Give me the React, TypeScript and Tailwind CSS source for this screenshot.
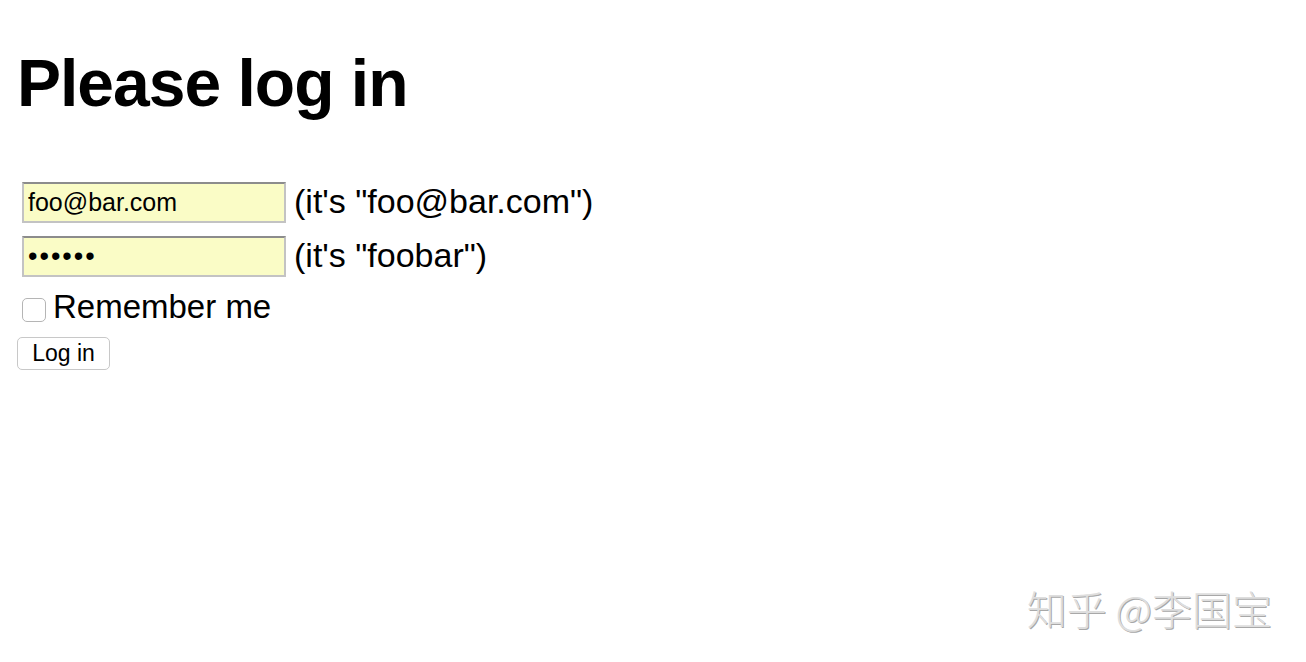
import React from "react";

const App = () => {
  return (
    <div className="relative h-[662px] w-[1306px] overflow-hidden bg-white pl-[17px] pt-[43px] font-['Liberation_Sans',Arial,sans-serif] text-black">
      {/* Title */}
      <h1 className="text-[66px] font-bold leading-[80px] tracking-[-1px]">Please log in</h1>

      {/* Form */}
      <form className="mt-[59px] flex flex-col" onSubmit={(e) => e.preventDefault()}>
        <div className="flex h-[54px] items-start gap-[8px] pl-[5px]">
          <input
            type="text"
            defaultValue="foo@bar.com"
            className="h-[41px] w-[264px] border-2 border-[#c3c3c3] border-t-[#8c8c8c] bg-[#fafcc6] px-[4px] text-[25px] outline-none"
          />
          <span className="text-[34px] leading-[38px]">(it's "foo@bar.com")</span>
        </div>
        <div className="flex h-[54px] items-start gap-[8px] pl-[5px]">
          <input
            type="password"
            defaultValue="foobar"
            className="h-[41px] w-[264px] border-2 border-[#c3c3c3] border-t-[#8c8c8c] bg-[#fafcc6] px-[4px] text-[27px] tracking-[2px] outline-none"
          />
          <span className="text-[34px] leading-[38px]">(it's "foobar")</span>
        </div>
        <label className="flex h-[39px] items-start gap-[7px] pl-[5px]">
          <input
            type="checkbox"
            className="mt-[8px] h-[24px] w-[24px] appearance-none rounded-[5px] border border-[#b5b5b5] bg-white"
          />
          <span className="text-[33px] leading-[34px]">Remember me</span>
        </label>
        <div className="mt-[8px]">
          <button
            type="submit"
            className="h-[33px] w-[93px] rounded-[5px] border border-[#c8c8c8] bg-white text-[23px] leading-none"
          >
            Log in
          </button>
        </div>
      </form>

      {/* Watermark */}
      <div className="absolute bottom-[34px] right-[34px] font-['Noto_Sans_CJK_SC',sans-serif] text-[40px] font-light leading-none text-[#dedede] [text-shadow:1px_1px_0_#a8a8a8]">
        知乎 @李国宝
      </div>
    </div>
  );
};

export default App;
